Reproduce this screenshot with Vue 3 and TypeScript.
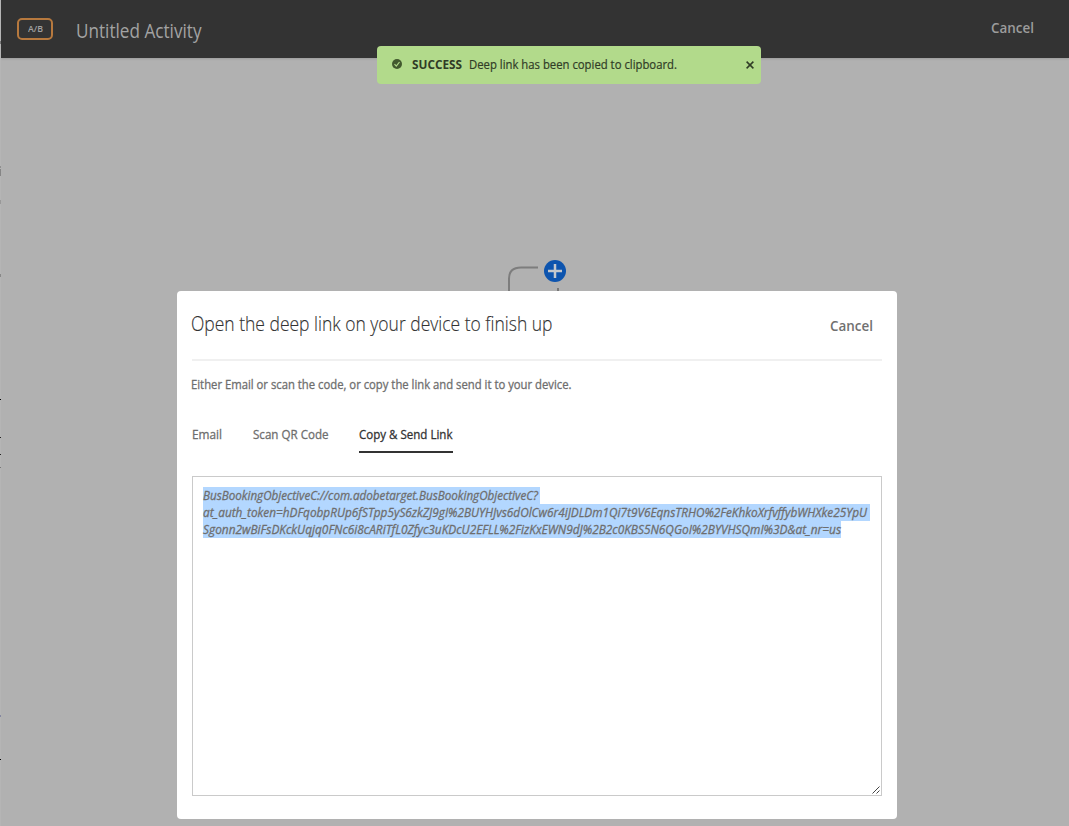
<script setup lang="ts">
interface Tab {
  label: string
  width: number
  active: boolean
}

interface Mark {
  top: number
  height: number
  color: string
}

const tabs: Tab[] = [
  { label: 'Email', width: 30, active: false },
  { label: 'Scan QR Code', width: 75.5, active: false },
  { label: 'Copy & Send Link', width: 93.5, active: true },
]

const linkLines: { text: string; width: number; tail: number }[] = [
  { text: 'BusBookingObjectiveC://com.adobetarget.BusBookingObjectiveC?', width: 335, tail: 2 },
  {
    text: 'at_auth_token=hDFqobpRUp6fSTpp5yS6zkZJ9gI%2BUYHJvs6dOlCw6r4iJDLDm1Qi7t9V6EqnsTRHO%2FeKhkoXrfvffybWHXke25YpU',
    width: 664,
    tail: 3,
  },
  {
    text: 'Sgonn2wBiFsDKckUqjq0FNc6i8cARiTfL0Zfyc3uKDcU2EFLL%2FizKxEWN9dJ%2B2c0KBS5N6QGoI%2BYVHSQmI%3D&at_nr=us',
    width: 638,
    tail: 0,
  },
]

const edgeMarks: Mark[] = [
  { top: 41, height: 3, color: '#777' },
  { top: 166, height: 2, color: '#909090' },
  { top: 169, height: 7, color: '#858585' },
  { top: 200, height: 4, color: '#999' },
  { top: 274, height: 3, color: '#888' },
  { top: 399, height: 1, color: '#000' },
  { top: 437, height: 1, color: '#222' },
  { top: 454, height: 1, color: '#222' },
  { top: 467, height: 1, color: '#777' },
  { top: 715, height: 2, color: '#8588a0' },
  { top: 759, height: 1, color: '#000' },
]

// Condenses a run of text horizontally so that it takes up the given width.
const vFit = {
  mounted(el: HTMLElement, binding: { value: number }) {
    const natural = el.getBoundingClientRect().width
    el.style.transform = `scaleX(${binding.value / natural})`
    el.style.marginRight = `${binding.value - natural}px`
  },
}
</script>

<template>
  <div class="page">
    <header class="topbar">
      <span class="badge"><span v-fit="15" class="fit">A/B</span></span>
      <h1 class="activity"><span v-fit="125.500" class="fit">Untitled Activity</span></h1>
      <button class="cancel top-cancel"><span v-fit="43" class="fit">Cancel</span></button>
    </header>

    <div class="edge">
      <i
        v-for="m in edgeMarks"
        :key="m.top"
        class="mark"
        :style="{ top: m.top + 'px', height: m.height + 'px', background: m.color }"
      />
    </div>

    <svg class="flow" width="70" height="36" viewBox="0 0 70 36">
      <path d="M9 36V23.500Q9 12.500 21 12.500H38" fill="none" stroke="#7d7d7d" stroke-width="2" />
      <path d="M58 33v3" stroke="#777" stroke-width="2" />
      <circle cx="55" cy="16" r="11" fill="#0d54ae" />
      <path d="M55 9v14M48 16h14" stroke="#c4c8cd" stroke-width="2.500" />
    </svg>

    <div class="toast">
      <svg class="check" width="10" height="10" viewBox="0 0 10 10">
        <circle cx="5" cy="5" r="5" fill="#42592e" />
        <path d="M2.500 5.200l1.800 1.900L7.500 3" fill="none" stroke="#b2da8b" stroke-width="1.200" />
      </svg>
      <strong><span v-fit="50" class="fit">SUCCESS</span></strong>
      <span class="message"><span v-fit="208" class="fit">Deep link has been copied to clipboard.</span></span>
      <svg class="close" width="8" height="8" viewBox="0 0 8 8">
        <path d="M.6.600l6.800 6.800M7.400.600L.6 7.400" stroke="#303c26" stroke-width="1.500" />
      </svg>
    </div>

    <section class="dialog">
      <div class="dialog-head">
        <h2><span v-fit="361.500" class="fit">Open the deep link on your device to finish up</span></h2>
        <button class="cancel"><span v-fit="43" class="fit">Cancel</span></button>
      </div>
      <p class="hint">
        <span v-fit="380.500" class="fit">Either Email or scan the code, or copy the link and send it to your device.</span>
      </p>
      <nav class="tabs">
        <a v-for="t in tabs" :key="t.label" class="tab" :class="{ active: t.active }">
          <span v-fit="t.width" class="fit">{{ t.label }}</span>
        </a>
      </nav>
      <div class="linkbox">
        <div v-for="l in linkLines" :key="l.text" class="line">
          <span class="selected" :style="{ paddingRight: l.tail + 'px' }">
            <span v-fit="l.width" class="fit">{{ l.text }}</span>
          </span>
        </div>
        <svg class="grip" width="8" height="8" viewBox="0 0 8 8">
          <path d="M.5 7.500l7-7M4.500 7.500l3-3" stroke="#444" stroke-width="1" />
        </svg>
      </div>
    </section>
  </div>
</template>

<style>
body {
  margin: 0;
}
</style>

<style scoped>
.page {
  position: relative;
  box-sizing: border-box;
  width: 1069px;
  height: 826px;
  overflow: hidden;
  background: #b1b1b1;
  font-family: 'Open Sans', 'Noto Sans', sans-serif;
  color: #323232;
}
.fit {
  display: inline-block;
  white-space: nowrap;
  transform-origin: 0 50%;
}
.topbar {
  display: flex;
  align-items: center;
  box-sizing: border-box;
  height: 58px;
  margin-left: 1px;
  padding: 0 35px 0 16px;
  background: #333;
  box-shadow: 0 1px 2px rgba(0, 0, 0, 0.12);
}
.badge {
  display: flex;
  align-items: center;
  justify-content: center;
  box-sizing: border-box;
  width: 36px;
  height: 22px;
  border: 2px solid #b7793e;
  border-radius: 5px;
  color: #a2a2a2;
  font-size: 9.500px;
  font-weight: 600;
  line-height: 18px;
}
.activity {
  margin: 3px 0 0 22.500px;
  color: #a3a3a3;
  font-size: 20px;
  font-weight: 400;
  line-height: 28px;
}
.cancel {
  padding: 0;
  border: 0;
  background: none;
  color: #707070;
  font: 600 14px/20px 'Open Sans', 'Noto Sans', sans-serif;
  text-align: left;
}
.top-cancel {
  margin: -3px 0 0 auto;
  color: #9c9c9c;
}
.edge {
  position: absolute;
  left: 0;
  top: 0;
  width: 1px;
  height: 100%;
  background: #b5b5b5;
}
.mark {
  position: absolute;
  left: 0;
  width: 1px;
}
.flow {
  position: absolute;
  left: 500px;
  top: 255px;
}
.toast {
  position: absolute;
  left: 377px;
  top: 46px;
  display: flex;
  align-items: center;
  box-sizing: border-box;
  width: 384px;
  height: 38px;
  padding: 0 7px 0 15px;
  border-radius: 4px;
  background: #b2da8b;
  color: #303c26;
  font-size: 12.500px;
  line-height: 18px;
}
.check {
  margin: -2px 10px 0 0;
}
.toast strong {
  font-weight: 700;
}
.message {
  margin-left: 7px;
  -webkit-text-stroke: 0.2px currentColor;
}
.close {
  margin: 0 0 0 auto;
}
.dialog {
  position: absolute;
  left: 177px;
  top: 291px;
  box-sizing: border-box;
  width: 720px;
  height: 528px;
  padding: 0 15px;
  border-radius: 4px;
  background: #fff;
}
.dialog-head {
  display: flex;
  align-items: center;
  justify-content: space-between;
  box-sizing: border-box;
  height: 70px;
  padding-right: 9px;
  border-bottom: 2px solid #f0f0f0;
}
.dialog-head h2 {
  margin: -2px 0 0 -1px;
  font-size: 19.500px;
  font-weight: 300;
  line-height: 28px;
  -webkit-text-stroke: 0.15px currentColor;
}
.dialog-head .cancel {
  margin-top: 2px;
}
.hint {
  margin: 15px 0 0 -1px;
  color: #6e6e6e;
  font-size: 12.500px;
  line-height: 18px;
  -webkit-text-stroke: 0.3px currentColor;
}
.tabs {
  display: flex;
  gap: 31px;
  margin: 32px 0 0 -0.5px;
}
.tab {
  height: 25px;
  border-bottom: 2px solid transparent;
  color: #6e6e6e;
  font-size: 12.500px;
  line-height: 18px;
  -webkit-text-stroke: 0.3px currentColor;
}
.tab.active {
  border-color: #323232;
  color: #323232;
}
.linkbox {
  position: relative;
  box-sizing: border-box;
  height: 320px;
  margin-top: 23px;
  padding: 10px;
  border: 1px solid #cacaca;
  color: #6e6e6e;
  font-size: 12.500px;
  font-style: italic;
  line-height: 17px;
  -webkit-text-stroke: 0.3px currentColor;
}
.line {
  display: flex;
  height: 17px;
}
.selected {
  display: block;
  background: #b3d7ff;
}
.grip {
  position: absolute;
  right: 1px;
  bottom: 1px;
}
</style>
